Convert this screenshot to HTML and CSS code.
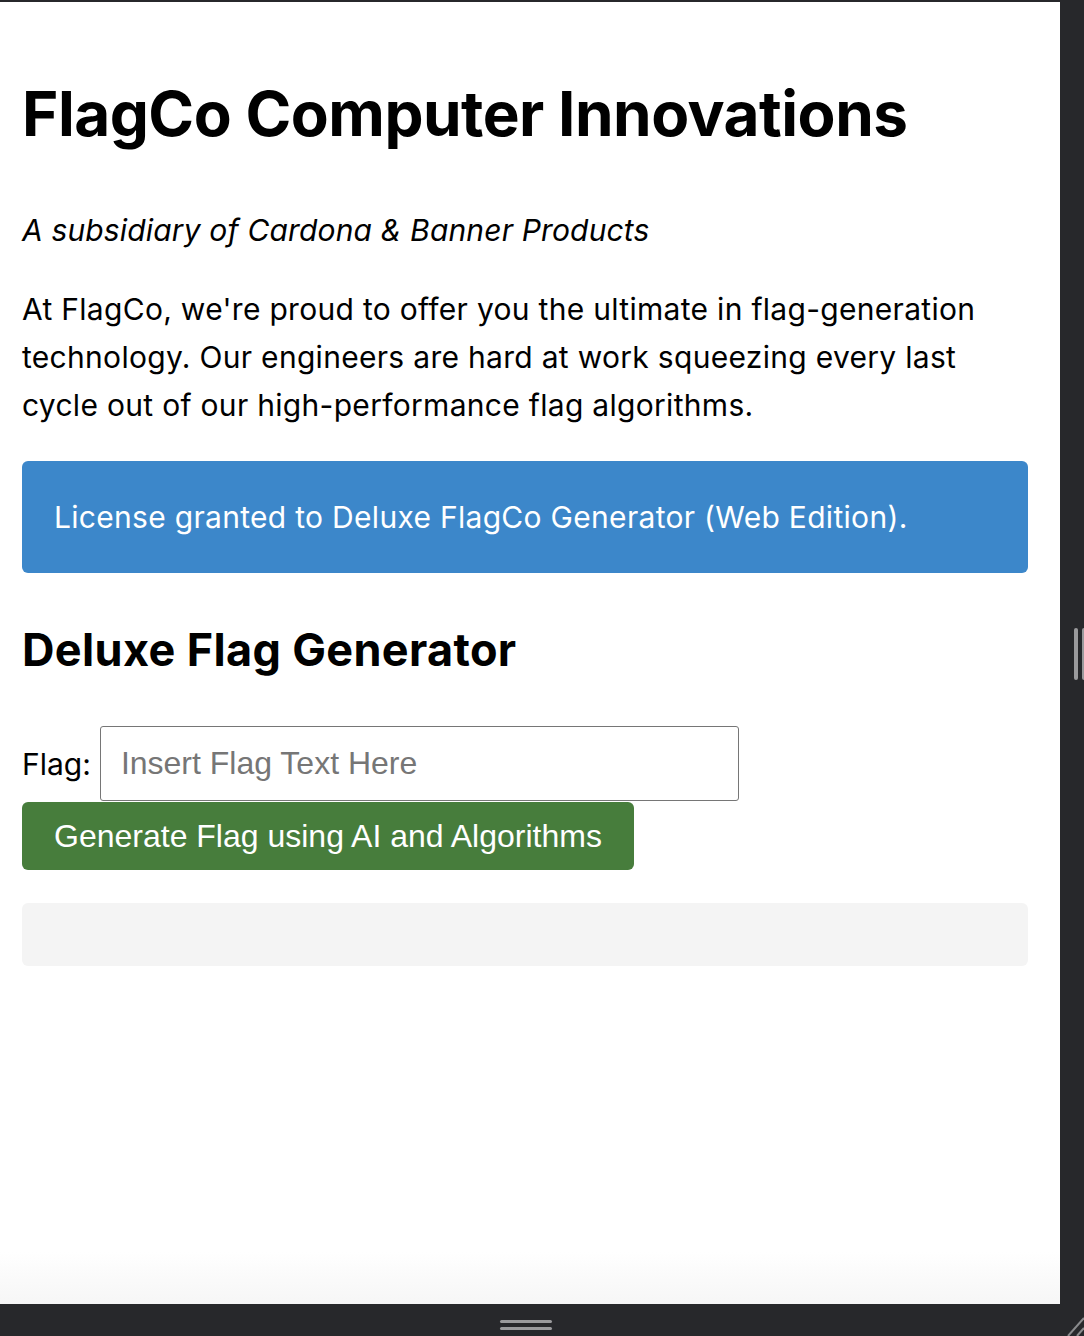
FILE: index.html
```html
<!DOCTYPE html>
<html lang="en">
<head>
<meta charset="utf-8">
<title>FlagCo Computer Innovations</title>
<link rel="stylesheet" href="styles.css">
</head>
<body>
<div class="frame">
  <main class="viewport">
    <div class="page">
      <h1 class="title">FlagCo Computer Innovations</h1>
      <p class="subtitle">A subsidiary of Cardona &amp; Banner Products</p>
      <p class="intro">At FlagCo, we're proud to offer you the ultimate in flag-generation technology. Our engineers are hard at work squeezing every last cycle out of our high-performance flag algorithms.</p>
      <div class="license">License granted to Deluxe FlagCo Generator (Web Edition).</div>
      <h2 class="section-title">Deluxe Flag Generator</h2>
      <form class="flag-form">
        <div class="flag-row">
          <label class="flag-label" for="flag">Flag:</label>
          <input class="flag-input" id="flag" type="text" placeholder="Insert Flag Text Here">
        </div>
        <button class="generate" type="button">Generate Flag using AI and Algorithms</button>
      </form>
      <div class="output"></div>
    </div>
  </main>
  <aside class="side-panel">
    <span class="grip-v"></span>
    <span class="grip-v grip-v2"></span>
  </aside>
  <footer class="bottom-panel">
    <span class="grip-h"></span>
    <span class="grip-h"></span>
  </footer>
  <div class="corner">
    <svg width="24" height="32" viewBox="0 0 24 32">
      <line x1="8" y1="32" x2="24" y2="14" stroke="#8a8b8d" stroke-width="2"/>
      <line x1="17" y1="32" x2="24" y2="24" stroke="#8a8b8d" stroke-width="2"/>
    </svg>
  </div>
</div>
</body>
</html>
```

FILE: styles.css
```css
* { box-sizing: border-box; }

html, body {
  margin: 0;
  padding: 0;
  background: #27282b;
}

.frame {
  display: grid;
  grid-template-columns: 1060px 24px;
  grid-template-rows: 1302px 32px;
  padding-top: 2px;
  width: 1084px;
  height: 1336px;
  background: #27282b;
  overflow: hidden;
}

.viewport {
  background: linear-gradient(to bottom, #ffffff 0, #ffffff 1250px, #f6f6f6 1302px);
  overflow: hidden;
}

.page {
  display: flex;
  flex-direction: column;
  align-items: flex-start;
  padding: 75px 32px 0 22px;
  font-family: Inter, "Noto Sans", sans-serif;
  font-size: 30px;
  line-height: 48px;
  letter-spacing: 0.3px;
  color: #000;
}

.title {
  margin: 0;
  font-size: 62px;
  line-height: 74px;
  font-weight: 700;
  letter-spacing: -0.5px;
}

.subtitle {
  margin: 55px 0 0;
  font-style: italic;
  letter-spacing: 0.15px;
}

.intro {
  margin: 31px 0 0;
}

.license {
  align-self: stretch;
  margin-top: 32px;
  padding: 32px 32px;
  background: #3c87ca;
  color: #fff;
  border-radius: 6px;
}

.section-title {
  margin: 50px 0 0;
  font-size: 45px;
  line-height: 54px;
  font-weight: 700;
  letter-spacing: 0.35px;
}

.flag-form {
  display: flex;
  flex-direction: column;
  align-items: flex-start;
  gap: 1px;
  margin-top: 49px;
}

.flag-row {
  display: flex;
  align-items: center;
  gap: 9px;
  letter-spacing: 0;
}

.flag-input {
  width: 639px;
  height: 75px;
  padding: 0 20px;
  border: 1px solid #767676;
  border-radius: 3px;
  font-family: "Liberation Sans", Arial, sans-serif;
  font-size: 32px;
  color: #000;
  background: #fff;
}

.flag-input::placeholder {
  color: #767676;
}

.generate {
  height: 68px;
  padding: 0 32px;
  border: none;
  border-radius: 6px;
  background: #477d3c;
  color: #fff;
  font-family: "Liberation Sans", Arial, sans-serif;
  font-size: 32px;
}

.output {
  align-self: stretch;
  height: 63px;
  margin-top: 33px;
  background: #f4f4f4;
  border-radius: 6px;
}

.side-panel {
  position: relative;
  background: #27282b;
}

.grip-v {
  position: absolute;
  left: 14px;
  top: 626px;
  width: 4px;
  height: 52px;
  border-radius: 2px;
  background: #9a9a9c;
}

.grip-v2 {
  left: 22px;
}

.bottom-panel {
  display: flex;
  flex-direction: column;
  align-items: center;
  justify-content: flex-start;
  gap: 4px;
  padding-top: 16px;
  padding-right: 8px;
  background: #27282b;
}

.grip-h {
  width: 52px;
  height: 3px;
  border-radius: 2px;
  background: #9a9a9c;
}

.corner {
  background: #27282b;
  line-height: 0;
}
```
